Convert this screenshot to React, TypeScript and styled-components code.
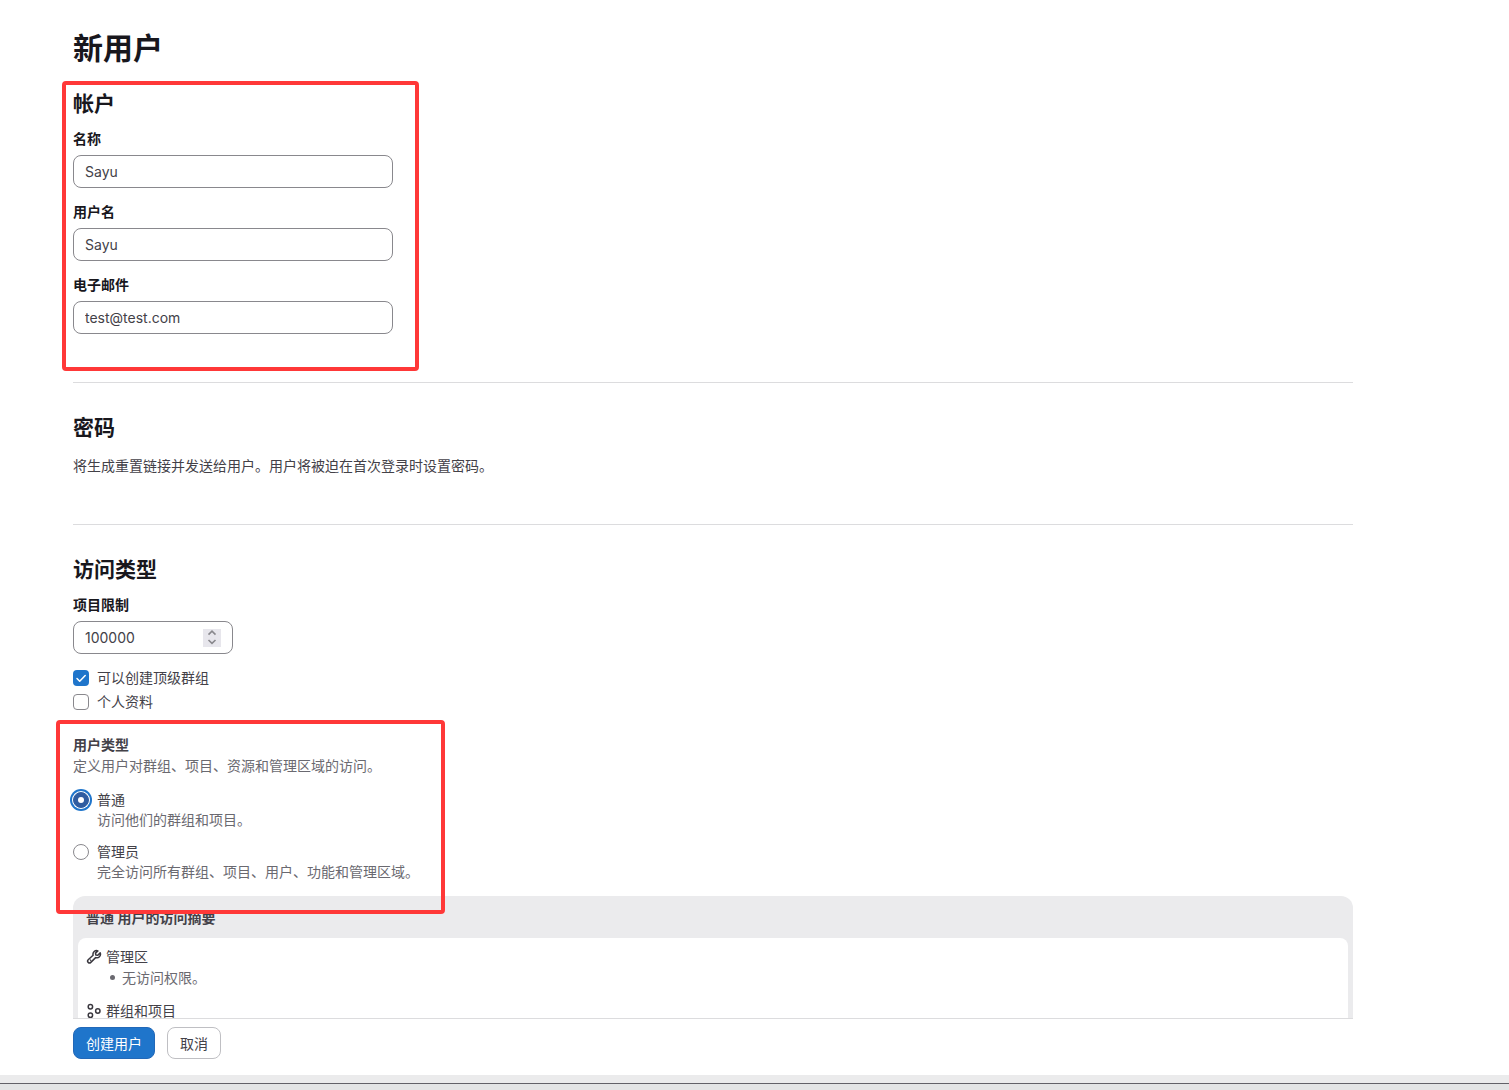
import React, { useState } from "react";
import styled, { createGlobalStyle, css } from "styled-components";

const color = {
  heading: "#18171d",
  text: "#434148",
  icon: "#3a383f",
  subtle: "#6a6970",
  border: "#89888d",
  divider: "#dcdcde",
  muted: "#ebebed",
  blue: "#1f75cb",
  blueDark: "#2f5ca0",
  red: "#ff3838",
};

const GlobalStyle = createGlobalStyle`
  *, *::before, *::after { box-sizing: border-box; }
  body {
    margin: 0;
    background: #fff;
    color: ${color.text};
    font-family: Inter, "Noto Sans CJK SC", sans-serif;
    font-size: 14px;
    line-height: 20px;
  }
  button, input { font: inherit; color: inherit; }
`;

const Shell = styled.div`
  display: flex;
  flex-direction: column;
  height: 100vh;
`;

const Form = styled.form`
  display: flex;
  flex-direction: column;
  flex: 1;
  min-height: 0;
`;

const column = css`
  width: 100%;
  max-width: 1353px;
  padding-left: 73px;
`;

const Scroll = styled.div`
  flex: 1;
  min-height: 0;
  overflow-y: auto;
  scrollbar-width: none;
`;

const Content = styled.main`
  ${column}
  padding-top: 28px;
`;

const Title = styled.h1`
  margin: 0 0 22px;
  color: ${color.heading};
  font-size: 30px;
  line-height: 40px;
  font-weight: 600;
`;

const Section = styled.section`
  padding-bottom: 34px;

  & + & {
    border-top: 1px solid ${color.divider};
    padding-top: 31px;
  }
`;

const Heading = styled.h2`
  margin: 0 0 11px;
  color: ${color.heading};
  font-size: 21px;
  line-height: 28px;
  font-weight: 600;
`;

const Marked = styled.div`
  position: relative;
`;

const Highlight = styled.div<{ $top: number; $left: number; $width: number; $height: number }>`
  position: absolute;
  z-index: 2;
  top: ${(p) => p.$top}px;
  left: ${(p) => p.$left}px;
  width: ${(p) => p.$width}px;
  height: ${(p) => p.$height}px;
  border: 4px solid ${color.red};
  border-radius: 4px;
  pointer-events: none;
`;

const Field = styled.div`
  margin-bottom: 14px;
`;

const Label = styled.label`
  display: block;
  margin-bottom: 6px;
  color: ${color.heading};
  font-weight: 600;
`;

const box = css`
  height: 33px;
  border: 1px solid ${color.border};
  border-radius: 8px;
  background: #fff;
`;

const TextInput = styled.input`
  ${box}
  display: block;
  width: 320px;
  max-width: 100%;
  padding: 0 11px;
`;

const NumberBox = styled.div`
  ${box}
  display: flex;
  align-items: center;
  width: 160px;
  padding: 0 11px;
`;

const NumberInput = styled.input`
  flex: 1;
  min-width: 0;
  padding: 0;
  border: 0;
  outline: 0;
  background: none;
  appearance: textfield;
`;

const Stepper = styled.div`
  display: flex;
  flex-direction: column;
  width: 18px;
  height: 18px;
  background: #e7e6ec;
`;

const Step = styled.button`
  display: flex;
  flex: 1;
  align-items: center;
  justify-content: center;
  padding: 0;
  border: 0;
  background: none;
  color: #89888d;
`;

const Paragraph = styled.p`
  margin: 0 0 11px;
  line-height: 26px;
`;

const ChoiceList = styled.div<{ $gap: number }>`
  display: flex;
  flex-direction: column;
  gap: ${(p) => p.$gap}px;
`;

const Choice = styled.label`
  display: grid;
  grid-template-columns: 16px auto;
  column-gap: 8px;
  justify-content: start;
`;

const control = css`
  display: grid;
  place-items: center;
  width: 16px;
  height: 16px;
  margin: 2px 0;
  appearance: none;
  border: 1px solid ${color.border};
  background: #fff;
`;

const checkMark =
  "data:image/svg+xml,%3Csvg xmlns='http://www.w3.org/2000/svg' viewBox='0 0 16 16' fill='none' stroke='white' stroke-width='1.5' stroke-linecap='round' stroke-linejoin='round'%3E%3Cpath d='M4 8.5l2.7 2.7L12.2 5.5'/%3E%3C/svg%3E";

const Checkbox = styled.input`
  ${control}
  border-radius: 4px;

  &:checked {
    border: 0;
    background: ${color.blue} url("${checkMark}") center / 16px 16px no-repeat;
  }
`;

const Radio = styled.input`
  ${control}
  border-radius: 50%;

  &:checked {
    border-color: ${color.blueDark};
    background: ${color.blueDark};
    box-shadow: 0 0 0 1px #fff, 0 0 0 3px ${color.blue};
  }
  &:checked::after {
    content: "";
    width: 6px;
    height: 6px;
    border-radius: 50%;
    background: #fff;
  }
`;

const Help = styled.span`
  grid-column: 2;
  color: ${color.subtle};
`;

const UserType = styled.fieldset`
  margin: 22px 0 14px;
  padding: 0;
  border: 0;
`;

const Legend = styled.legend`
  padding: 0;
  line-height: 21px;
  font-weight: 600;
`;

const Hint = styled.p`
  margin: 0 0 14px;
  color: ${color.subtle};
  line-height: 21px;
`;

const Summary = styled.section`
  padding: 0 5px 5px;
  border-radius: 12px;
  background: ${color.muted};
`;

const SummaryTitle = styled.h3`
  margin: 0;
  padding: 12px 8px 10px;
  font-size: 14px;
  line-height: 20px;
  font-weight: 600;
`;

const SummaryBody = styled.div`
  display: flex;
  flex-direction: column;
  gap: 12px;
  padding: 8px;
  border-radius: 8px;
  background: #fff;
`;

const AreaName = styled.div`
  display: flex;
  align-items: center;
  gap: 4px;
  line-height: 21px;

  svg {
    color: ${color.icon};
  }
`;

const Permissions = styled.ul`
  margin: 0;
  padding: 0 0 0 24px;
  color: ${color.subtle};
  line-height: 21px;
  list-style: none;
`;

const Permission = styled.li`
  display: flex;
  align-items: center;
  gap: 7px;

  &::before {
    content: "";
    width: 5px;
    height: 5px;
    border-radius: 50%;
    background: currentColor;
  }
`;

const Actions = styled.div`
  ${column}
`;

const ActionBar = styled.div`
  display: flex;
  gap: 12px;
  padding: 8px 0 16px;
  border-top: 1px solid ${color.divider};
`;

const Button = styled.button<{ $primary?: boolean }>`
  height: 32px;
  padding: 2px 12px 0;
  border: 1px solid ${(p) => (p.$primary ? "#2268b8" : "#bfbfc3")};
  border-radius: 8px;
  background: ${(p) => (p.$primary ? color.blue : "#fff")};
  color: ${(p) => (p.$primary ? "#fff" : color.text)};
`;

const BottomEdge = styled.footer`
  height: 15px;
  border-top: 8px solid #ebebec;
  background: #e3e4e5;

  &::before {
    content: "";
    display: block;
    height: 1px;
    background: #626168;
  }
`;

const Wrench = () => (
  <svg width="16" height="16" viewBox="0 0 16 16" fill="none" stroke="currentColor" strokeWidth="1.5" strokeLinejoin="round" aria-hidden="true">
    <path d="M11.9 1.9a3.6 3.6 0 0 0-4.8 4.3L2.2 10.8a1.8 1.8 0 0 0 2.6 2.6l4.8-4.8a3.6 3.6 0 0 0 4.6-4.7L11.8 6.3 9.8 5.9 9.5 4.1z" />
    <path d="M4.2 11.6 5 10.8" />
  </svg>
);

const Groups = () => (
  <svg width="16" height="16" viewBox="0 0 16 16" fill="none" stroke="currentColor" strokeWidth="1.5" aria-hidden="true">
    <circle cx="4.4" cy="3.7" r="2.2" />
    <circle cx="11.8" cy="8" r="2.2" />
    <circle cx="4.4" cy="12.3" r="2.2" />
  </svg>
);

const Chevron = ({ down }: { down?: boolean }) => (
  <svg width="10" height="6" viewBox="0 0 10 6" fill="none" stroke="currentColor" strokeWidth="1.6" aria-hidden="true">
    <path d={down ? "M1.5 1L5 4.4 8.5 1" : "M1.5 4.6L5 1.2 8.5 4.6"} />
  </svg>
);

const accountFields = [
  { id: "name", label: "名称", type: "text", value: "Sayu" },
  { id: "username", label: "用户名", type: "text", value: "Sayu" },
  { id: "email", label: "电子邮件", type: "email", value: "test@test.com" },
];

const userTypes = [
  { id: "regular", label: "普通", help: "访问他们的群组和项目。" },
  { id: "admin", label: "管理员", help: "完全访问所有群组、项目、用户、功能和管理区域。" },
];

export default function App() {
  const [limit, setLimit] = useState(100000);
  const [userType, setUserType] = useState("regular");
  const selected = userTypes.find((t) => t.id === userType)!;

  return (
    <Shell>
      <GlobalStyle />
      <Form onSubmit={(e) => e.preventDefault()}>
        <Scroll>
          <Content>
            <Title>新用户</Title>

            <Section>
              <Marked>
                <Highlight $top={-9} $left={-11} $width={357} $height={290} />
                <Heading>帐户</Heading>
                {accountFields.map((f) => (
                  <Field key={f.id}>
                    <Label htmlFor={f.id}>{f.label}</Label>
                    <TextInput id={f.id} type={f.type} defaultValue={f.value} />
                  </Field>
                ))}
              </Marked>
            </Section>

            <Section>
              <Heading>密码</Heading>
              <Paragraph>将生成重置链接并发送给用户。用户将被迫在首次登录时设置密码。</Paragraph>
            </Section>

            <Section>
              <Heading>访问类型</Heading>
              <Field>
                <Label htmlFor="limit">项目限制</Label>
                <NumberBox>
                  <NumberInput id="limit" type="number" value={limit} onChange={(e) => setLimit(Number(e.target.value))} />
                  <Stepper>
                    <Step type="button" aria-label="+1" onClick={() => setLimit(limit + 1)}>
                      <Chevron />
                    </Step>
                    <Step type="button" aria-label="-1" onClick={() => setLimit(limit - 1)}>
                      <Chevron down />
                    </Step>
                  </Stepper>
                </NumberBox>
              </Field>
              <ChoiceList $gap={4}>
                <Choice>
                  <Checkbox type="checkbox" defaultChecked />
                  可以创建顶级群组
                </Choice>
                <Choice>
                  <Checkbox type="checkbox" />
                  个人资料
                </Choice>
              </ChoiceList>

              <Marked>
                <Highlight $top={-14} $left={-17} $width={389} $height={194} />
                <UserType>
                  <Legend>用户类型</Legend>
                  <Hint>定义用户对群组、项目、资源和管理区域的访问。</Hint>
                  <ChoiceList $gap={12}>
                    {userTypes.map((t) => (
                      <Choice key={t.id}>
                        <Radio type="radio" name="user-type" checked={userType === t.id} onChange={() => setUserType(t.id)} />
                        {t.label}
                        <Help>{t.help}</Help>
                      </Choice>
                    ))}
                  </ChoiceList>
                </UserType>
              </Marked>

              <Summary>
                <SummaryTitle>{selected.label} 用户的访问摘要</SummaryTitle>
                <SummaryBody>
                  <div>
                    <AreaName>
                      <Wrench />
                      管理区
                    </AreaName>
                    <Permissions>
                      <Permission>无访问权限。</Permission>
                    </Permissions>
                  </div>
                  <AreaName>
                    <Groups />
                    群组和项目
                  </AreaName>
                </SummaryBody>
              </Summary>
            </Section>
          </Content>
        </Scroll>
        <Actions>
          <ActionBar>
            <Button type="submit" $primary>
              创建用户
            </Button>
            <Button type="button">取消</Button>
          </ActionBar>
        </Actions>
      </Form>
      <BottomEdge />
    </Shell>
  );
}
